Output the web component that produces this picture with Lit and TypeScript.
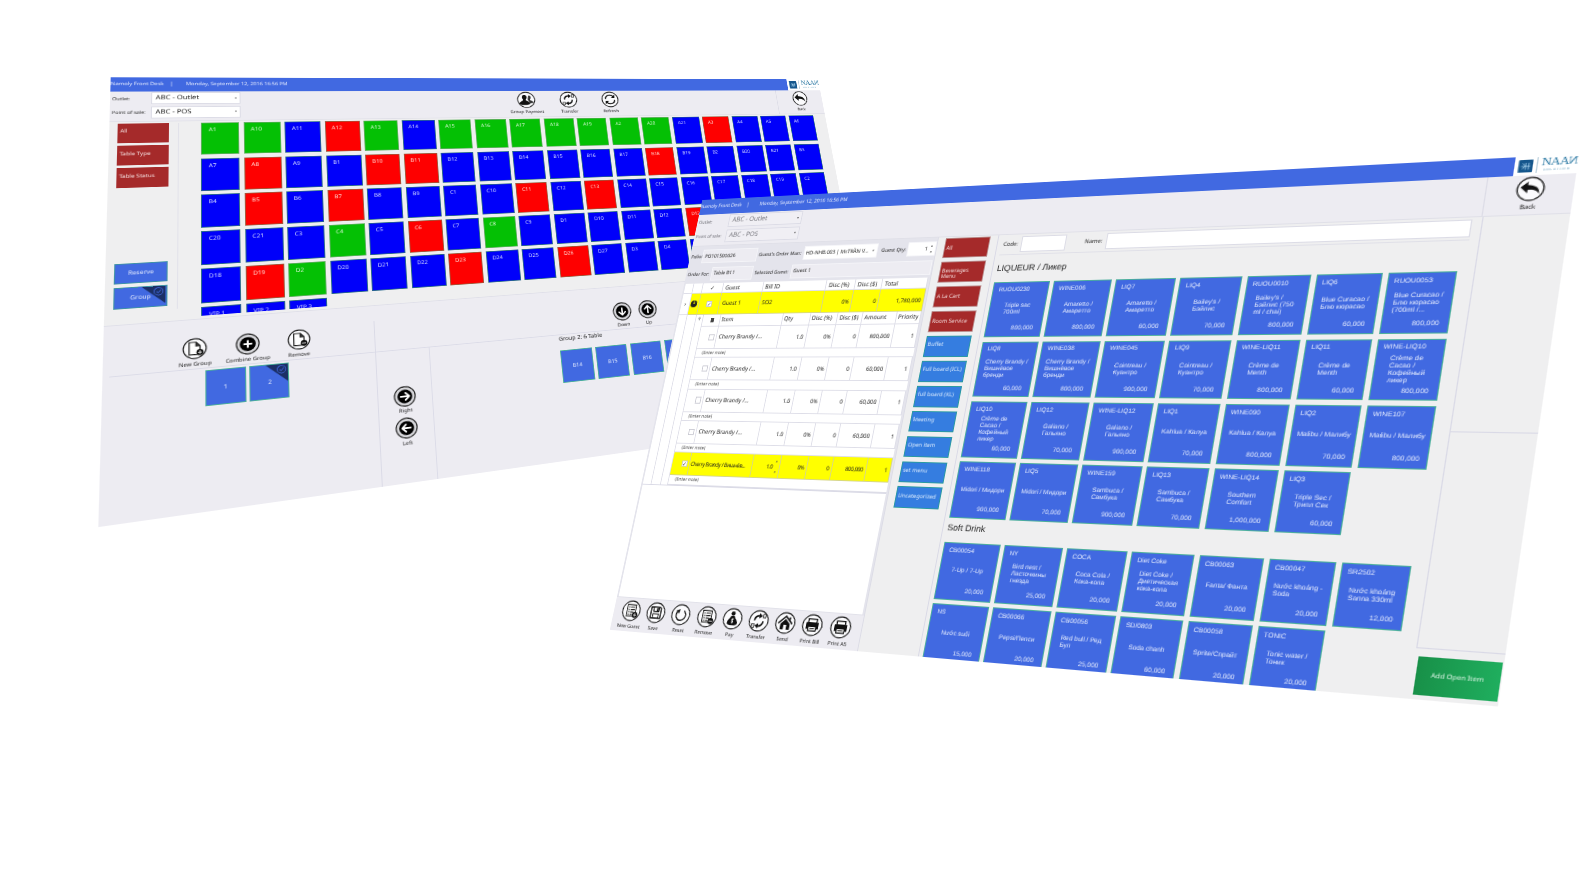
import { LitElement, html, css, svg, nothing } from "lit";
import { customElement } from "lit/decorators.js";
import { classMap } from "lit/directives/class-map.js";
import { styleMap } from "lit/directives/style-map.js";

type Pt = [number, number];

/** Windows are laid out at 1366 x 768 and drawn at this zoom before being projected. */
const ZOOM = 0.65;
const WIN_W = 1366 * ZOOM;
const WIN_H = 768 * ZOOM;

/** matrix3d that carries the window rectangle onto four screen corners (tl, tr, br, bl). */
function project(q: Pt[]): string {
  const [[x0, y0], [x1, y1], [x2, y2], [x3, y3]] = q;
  const dx1 = x1 - x2, dx2 = x3 - x2, sx = x0 - x1 + x2 - x3;
  const dy1 = y1 - y2, dy2 = y3 - y2, sy = y0 - y1 + y2 - y3;
  const den = dx1 * dy2 - dx2 * dy1;
  const g = (sx * dy2 - dx2 * sy) / den;
  const h = (dx1 * sy - sx * dy1) / den;
  const a = (x1 - x0 + g * x1) / WIN_W, b = (x3 - x0 + h * x3) / WIN_H;
  const d = (y1 - y0 + g * y1) / WIN_W, e = (y3 - y0 + h * y3) / WIN_H;
  return `matrix3d(${[a, d, 0, g / WIN_W, b, e, 0, h / WIN_H, 0, 0, 1, 0, x0, y0, 0, 1].map((n) => n.toFixed(9)).join(",")}) translate(-3px, -3px)`;
}

/* ---------- icons (36 x 36) ---------- */
const ring = svg`<circle cx="18" cy="18" r="16.3" fill="#fbfbfd" stroke="#222" stroke-width="1.7"/>`;
const disc = svg`<circle cx="18" cy="18" r="16.6" fill="#d6d6da" stroke="#222" stroke-width="1.7"/><circle cx="18" cy="18" r="11.8" fill="#000"/>`;
const arrow = (deg: number) => svg`${disc}<g transform="rotate(${deg} 18 18)" stroke="#fff" stroke-width="2.8" fill="none" stroke-linecap="round" stroke-linejoin="round"><path d="M11.5 18h13M19 12l6 6-6 6"/></g>`;
const page = svg`<path d="M10 7.5h10l5.5 6V28H10z" fill="#fff" stroke="#222" stroke-width="1.8"/><path d="M19.5 7.5v6.500h6" fill="#333" stroke="#222" stroke-width="1.200"/>`;
const list = svg`<path d="M10 8h16v19H10z" fill="#fff" stroke="#222" stroke-width="1.700"/><path d="M12.500 12h2M16 12h8M12.500 16h2M16 16h8M12.500 20h2M16 20h6M12.500 24h2M16 24h4" stroke="#222" stroke-width="1.800"/>`;
const swap = svg`<path d="M10.500 17.500c0-5 3.500-8 8.500-7.800" fill="none" stroke="#111" stroke-width="2.800"/><path d="M18 5.500l6 4.500-6 4.300z" fill="#111"/><path d="M25.500 18.500c0 5-3.500 8-8.500 7.800" fill="none" stroke="#111" stroke-width="2.800"/><path d="M18 30.500L12 26l6-4.300z" fill="#111"/><path d="M25 7h4v6h-4zM7 23h4v6H7z" fill="#ddd" stroke="#222" stroke-width="1.200"/>`;
const printer = svg`<path d="M11 8.500h14v6H11z" fill="#fff" stroke="#111" stroke-width="2"/><path d="M7.500 14h21v10.500h-4V20h-13v4.500h-4z" fill="#111"/><path d="M11.500 20h13v7h-13z" fill="#fff" stroke="#111" stroke-width="1.800"/><path d="M14 23.500h8" stroke="#111" stroke-width="1.500"/>`;
const badge = (minus: boolean) => svg`<circle cx="25.500" cy="24.500" r="5" fill="#111"/><path d="${minus ? "M22.500 24.500h6" : "M22.500 24.500h6M25.500 21.500v6"}" stroke="#fff" stroke-width="1.300"/>`;

const ICONS: Record<string, unknown> = {
  back: svg`${ring}<path d="M5.500 15.500L14.500 7.500v5c9 0 15 4.500 14.500 13-3-5.500-7.500-6.800-14.500-6.500v5z" fill="#111"/>`,
  people: svg`${ring}<path d="M23 8.500c3.200 0 4.300 2.400 3.800 5.200-.4 2-1.300 2.800-1.300 4.300 0 2 6 2 6.300 6.500l-7 1.500-4-9z" fill="#333"/><path d="M14.500 7.500c3.800 0 5 2.800 4.500 6-.4 2.200-1.600 3.200-1.600 4.700 0 2.300 7.600 2.800 7.600 8.800-5 2.300-15.500 2.300-20.500 0 0-6 7.500-6.500 7.500-8.800 0-1.500-1.200-2.500-1.600-4.700-.5-3.200.6-6 4.100-6z" fill="#111"/>`,
  swap: svg`${ring}${swap}`,
  refresh: svg`${ring}<path d="M9 17c0-5.500 4-8.500 9-8.500 3 0 5.500 1.300 7 3.500M27 19c0 5.500-4 8.500-9 8.500-3 0-5.500-1.300-7-3.500" fill="none" stroke="#111" stroke-width="2.700"/><path d="M27.500 7.500v7.500H20zM8.500 28.500V21H16z" fill="#111"/>`,
  newGroup: svg`${ring}${page}${badge(false)}`,
  removeGroup: svg`${ring}${page}${badge(true)}`,
  plus: svg`${disc}<path d="M18 11.500v13M11.500 18h13" stroke="#fff" stroke-width="3"/>`,
  right: arrow(0),
  left: arrow(180),
  down: arrow(90),
  up: arrow(-90),
  newGuest: svg`${ring}${list}${badge(false)}`,
  remove: svg`${ring}${list}${badge(true)}`,
  save: svg`${ring}<path d="M9 9h16l2 2v16H9z" fill="#fff" stroke="#111" stroke-width="2.200"/><path d="M13.500 9h9.500v7h-9.500z" fill="#fff" stroke="#111" stroke-width="1.800"/><path d="M19 10h3v5h-3z" fill="#111"/><path d="M13 27v-7h10v7" fill="none" stroke="#111" stroke-width="1.500"/>`,
  reset: svg`${ring}<path d="M12 12.500A8.700 8.700 0 1 0 23 11.300" fill="none" stroke="#222" stroke-width="2.300"/><path d="M8.500 11.500l7.500-2.500-1.500 7.500z" fill="#222"/>`,
  pay: svg`${ring}<circle cx="18" cy="9.500" r="3.600" fill="#111"/><path d="M15 13.500h6c1 3 6 7 6 11 0 3-4 4-9 4s-9-1-9-4c0-4 5-8 6-11z" fill="#111"/><path d="M20 18.500c-2.500-1.500-4.500.8-2.300 2.200 2.300 1.300 2 3.800-1.700 2.800M18 17v9" fill="none" stroke="#fff" stroke-width="1.200"/>`,
  home: svg`${ring}<path d="M6 19L18 7.500 30 19" fill="none" stroke="#111" stroke-width="2.500"/><path d="M10 19.500l8-7.800 8 7.800v9h-5.500V21h-5v7.500H10z" fill="#111"/><path d="M23.500 8.500h3v5l-3-2.500z" fill="#111"/>`,
  print: svg`${ring}${printer}`,
};

const icon = (name: string, label: string) => html`<div class="tool"><svg viewBox="0 0 36 36">${ICONS[name]}</svg><span>${label}</span></div>`;

const titlebar = html`
  <div class="titlebar">
    <div class="title"><span class="app">Namoly Front Desk</span><span class="bar">|</span><span>Monday, September 12, 2016 16:56 PM</span></div>
    <div class="logo">
      <svg viewBox="0 0 16 17"><rect width="16" height="17" rx="1" fill="#14568c"/><path d="M4.500 4.500l3 3.500-3 4M8 4v9M11.500 4v9M3 8.500h10" stroke="#a9d4ee" stroke-width="1" fill="none"/></svg>
      <div class="brand"><b>NAA<i>N</i></b><small>SOLUTION</small></div>
    </div>
  </div>`;

const header = (tools: unknown) => html`
  <div class="header">
    <div class="outlets">
      <label>Outlet:</label><div class="select">ABC - Outlet</div>
      <label>Point of sale:</label><div class="select">ABC - POS</div>
    </div>
    <div class="headtools">${tools}</div>
    <div class="backbox">${icon("back", "Back")}</div>
  </div>`;

const shared = css`
  :host { display: block; width: 1366px; height: 768px; overflow: hidden; font: 9px/1.2 "Noto Sans", sans-serif; color: #1c1c1c; background: #efeff0; text-rendering: geometricPrecision; }
  * { box-sizing: border-box; }
  .titlebar { display: flex; height: 27px; background: #fff; }
  .title { flex: 1; display: flex; align-items: center; background: #4169e1; color: #e4eafd; font-size: 9px; white-space: nowrap; }
  .app { width: 90px; }
  .bar { width: 25px; }
  .logo { width: 78px; display: flex; align-items: center; padding-left: 5px; gap: 4px; }
  .logo svg { width: 19px; height: 19px; flex: none; }
  .brand { border-left: 1px solid #b9cfdc; padding-left: 4px; color: #3c83ab; display: flex; flex-direction: column; line-height: 1; white-space: nowrap; height: 23px; }
  .brand b { font: 16.500px/16px "Liberation Serif", serif; letter-spacing: -0.8px; color: #2f7ba5; }
  .brand i { display: inline-block; transform: scaleX(-1); font-style: normal; }
  .brand small { font-size: 4px; letter-spacing: 1.7px; padding-left: 3px; }
  .header { display: flex; height: 59px; background: #edecf2; border-bottom: 2px solid #e0e0e8; }
  .outlets { display: grid; grid-template-columns: 58px 141px; grid-auto-rows: 23px; row-gap: 4px; align-items: center; padding: 3px 0 0 3px; width: 500px; font-size: 8.400px; color: #333; white-space: nowrap; }
  .select { display: flex; justify-content: space-between; align-items: center; height: 23px; padding: 0 5px 0 6px; background: #fff; border: 1px solid #dcdce6; font-size: 11.800px; color: #222; white-space: nowrap; }
  .select::after { content: ""; border: 3px solid transparent; border-top: 4px solid #555; border-bottom: 0; }
  .headtools { flex: 1; display: flex; gap: 49px; padding: 3px 0 0 193px; }
  .headtools .tool { width: 36px; }
  .backbox { width: 110px; border-left: 2px solid #dcdce6; padding-top: 3px; display: flex; justify-content: center; }
  .tool { display: flex; flex-direction: column; align-items: center; white-space: nowrap; font-size: 9px; line-height: 12px; }
  .tool svg { width: 37px; height: 37px; flex: none; }
  .tool span { margin-top: 2px; }
`;

const ROWS = [
  "A1 A10 A11 A12 A13 A14 A15 A16 A17 A18 A19 A2 A20 A21 A3 A4 A5 A6",
  "A7 A8 A9 B1 B10 B11 B12 B13 B14 B15 B16 B17 B18 B19 B2 B20 B21 B3",
  "B4 B5 B6 B7 B8 B9 C1 C10 C11 C12 C13 C14 C15 C16 C17 C18 C19 C2",
  "C20 C21 C3 C4 C5 C6 C7 C8 C9 D1 D10 D11 D12 D13 D14 D15 D16 D17",
  "D18 D19 D2 D20 D21 D22 D23 D24 D25 D26 D27 D3 D4 D5 D6 D7 D8 D9",
];
const TABLES = [...ROWS.flatMap((r) => r.split(" ")), "VIP 1", "VIP 2", "VIP 3"];
const FREE = new Set("A1 A10 A13 A15 A16 A17 A18 A19 A2 A20 C4 C8 D2".split(" "));
const BUSY = new Set("A12 A3 A8 B10 B11 B18 B5 B7 C11 C13 C6 D13 D19 D23 D26".split(" "));

const corner = html`<svg class="corner" viewBox="0 0 34 30"><path d="M0 0h34v30z" fill="#1b2f66"/><circle cx="24" cy="9" r="6.500" fill="none" stroke="#4169e1" stroke-width="1.200"/><path d="M21 9l2.500 2.500 4-5" fill="none" stroke="#4169e1" stroke-width="1.200"/></svg>`;

@customElement("floor-window")
class FloorWindow extends LitElement {
  static styles = [shared, css`
    .floor { display: flex; height: 365px; border-bottom: 2px solid #e0e0e9; }
    .side { width: 104px; height: 340px; margin-top: 3px; padding: 0 14px 0 13px; display: flex; flex-direction: column; border-right: 2px solid #e2e2ea; font-size: 9.300px; }
    .red { height: 36.500px; margin-bottom: 5.500px; background: #a52a2a; color: #f3dede; padding: 10px 0 0 3px; }
    .act { height: 36.500px; display: grid; place-items: center; background: #4169e1; color: #dfe7fd; border: 1px solid #3f93a5; position: relative; font-size: 10px; }
    .act.first { margin-top: 129px; margin-bottom: 5.500px; }
    .act, .red { flex: none; }
    .tables { height: 355px; margin: 4px 0 0 35px; overflow: hidden; display: grid; grid-template-columns: repeat(18, 60px); grid-auto-rows: 61.500px; gap: 6.400px 6.900px; align-content: start; }
    .t { background: #0000fa; border: 1px solid #2c6a8c; color: #d6dcff; font-size: 10px; padding: 6px 0 0 10px; white-space: nowrap; }
    .t.free { background: #04c004; color: #d3f5d0; border-color: #5cb05c; }
    .t.busy { background: #fe0000; color: #ffd8d2; border-color: #a05a3c; }
    .lower { display: flex; height: 317px; background: #edecf2; }
    .groups { width: 407px; background: linear-gradient(#dadae6, #dadae6) right bottom / 1.500px 290px no-repeat; }
    .strip { display: flex; height: 85px; padding-top: 31px; border-bottom: 1.500px solid #dcdce8; }
    .groups .strip { gap: 42px; padding-left: 103px; margin-left: 9px; }
    .groups .strip .tool { width: 36px; }
    .cards { display: flex; gap: 6px; padding: 3px 0 0 144px; }
    .card { position: relative; width: 60px; height: 60px; display: grid; place-items: center; background: #4169e1; border: 1px solid #4bb09b; color: #dfe7fd; font-size: 10px; }
    .corner { position: absolute; right: 0; top: 0; width: 34px; height: 30px; }
    .mover { width: 90px; }
    .mover .body { height: 232px; border-right: 1.500px solid #dcdce8; padding-top: 64px; display: flex; flex-direction: column; align-items: center; gap: 5px; }
    .rest { flex: 1; }
    .rest .strip { padding-left: 337px; gap: 13px; }
    .rest .strip .tool { width: 37px; }
    .caption { padding: 2px 0 0 229px; font-size: 10.800px; line-height: 12px; }
    .members { display: flex; gap: 7px; padding: 14px 0 0 229px; }
    .members .card { height: 62px; }
  `];
  render() {
    return html`
      ${titlebar}
      ${header(html`${icon("people", "Group Payment")}${icon("swap", "Transfer")}${icon("refresh", "Refresh")}`)}
      <div class="floor">
        <div class="side">
          <div class="red">All</div><div class="red">Table Type</div><div class="red">Table Status</div>
          <div class="act first">Reserve</div><div class="act">Group${corner}</div>
        </div>
        <div class="tables">${TABLES.map((t) => html`<div class=${classMap({ t: true, free: FREE.has(t), busy: BUSY.has(t) })}>${t}</div>`)}</div>
      </div>
      <div class="lower">
        <div class="groups">
          <div class="strip">${icon("newGroup", "New Group")}${icon("plus", "Combine Group")}${icon("removeGroup", "Remove")}</div>
          <div class="cards"><div class="card">1</div><div class="card">2${corner}</div></div>
        </div>
        <div class="mover"><div class="strip"></div><div class="body">${icon("right", "Right")}${icon("left", "Left")}</div></div>
        <div class="rest">
          <div class="strip">${icon("down", "Down")}${icon("up", "Up")}</div>
          <div class="caption">Group 2: 6 Table</div>
          <div class="members">${["B14", "B15", "B16", "B17", "B18", "B19"].map((b) => html`<div class="card">${b}</div>`)}</div>
        </div>
      </div>`;
  }
}

type Item = [string, string, string];
const LIQUEUR: Item[] = [
  ["RUOU0230", "Triple sac\n700ml", "800,000"], ["WINE006", "Amaretto /\nАмаретто", "800,000"], ["LIQ7", "Amaretto /\nАмаретто", "60,000"], ["LIQ4", "Bailey's /\nБэйлис", "70,000"], ["RUOU0010", "Bailey's /\nБэйлис (750\nml / chai)", "800,000"], ["LIQ6", "Blue Curacao /\nБлю кюрасао", "60,000"], ["RUOU0053", "Blue Curacao /\nБлю кюрасао\n(700ml /...", "800,000"],
  ["LIQ8", "Cherry Brandy /\nВишнёвое\nбренди", "60,000"], ["WINE038", "Cherry Brandy /\nВишнёвое\nбренди", "800,000"], ["WINE045", "Cointreau /\nКуантро", "900,000"], ["LIQ9", "Cointreau /\nКуантро", "70,000"], ["WINE-LIQ11", "Crème de\nMenth", "800,000"], ["LIQ11", "Crème de\nMenth", "60,000"], ["WINE-LIQ10", "Crème de\nCacao /\nКофейный\nликер", "800,000"],
  ["LIQ10", "Crème de\nCacao /\nКофейный\nликер", "60,000"], ["LIQ12", "Galiano /\nГальяно", "70,000"], ["WINE-LIQ12", "Galiano /\nГальяно", "900,000"], ["LIQ1", "Kahlua / Калуа", "70,000"], ["WINE090", "Kahlua / Калуа", "800,000"], ["LIQ2", "Malibu / Малибу", "70,000"], ["WINE107", "Malibu / Малибу", "800,000"],
  ["WINE118", "Midori / Мидори", "900,000"], ["LIQ5", "Midori / Мидори", "70,000"], ["WINE159", "Sambuca /\nСамбука", "900,000"], ["LIQ13", "Sambuca /\nСамбука", "70,000"], ["WINE-LIQ14", "Southern\nComfort", "1,000,000"], ["LIQ3", "Triple Sec /\nТрипл Сек", "60,000"],
];
const SOFT: Item[] = [
  ["CB00054", "7-Up / 7-Up", "20,000"], ["NY", "Bird nest /\nЛасточкины\nгнезда", "25,000"], ["COCA", "Coca Cola /\nКока-кола", "20,000"], ["Diet Coke", "Diet Coke /\nДиетическая\nкока-кола", "20,000"], ["CB00063", "Fanta/ Фанта", "20,000"], ["CB00047", "Nước khoáng -\nSoda", "20,000"], ["SR2502", "Nước khoáng\nSanna 330ml", "12,000"],
  ["NS", "Nước suối", "15,000"], ["CB00066", "Pepsi/Пепси", "20,000"], ["CB00056", "Red bull / Ред\nБул", "25,000"], ["SD/0803", "Soda chanh", "60,000"], ["CB00058", "Sprite/Спрайт", "20,000"], ["TONIC", "Tonic water /\nТоник", "20,000"],
];
const CATS = ["All", "Beverages\nMenu", "A La Cart", "Room Service", "Buffet", "Full board (ICL)", "full board (KL)", "Meeting", "Open item", "set menu", "Uncategorized"];
const ACTIONS: [string, string][] = [["newGuest", "New Guest"], ["save", "Save"], ["reset", "Reset"], ["remove", "Remove"], ["pay", "Pay"], ["swap", "Transfer"], ["home", "Send"], ["print", "Print Bill"], ["print", "Print A5"]];
const LINES = ["800,000", "60,000", "60,000", "60,000"];

@customElement("order-window")
class OrderWindow extends LitElement {
  static styles = [shared, css`
    .select { background: #f0eff4; color: #77777e; }
    .outlets { color: #77777e; }
    .main { display: flex; height: 682px; }
    .order { width: 456px; display: flex; flex-direction: column; background: #e4e4ec; border-right: 1px solid #dcdce6; padding-left: 3px; }
    .fields { height: 68px; display: flex; flex-direction: column; gap: 8px; padding-top: 7px; }
    .f { display: flex; align-items: center; height: 24px; font-size: 8.800px; white-space: nowrap; }
    .in { height: 24px; background: #edecf2; border: 1px solid #f4f4f8; display: flex; align-items: center; padding-left: 3px; font-size: 9.100px; }
    .in.white { background: #fff; justify-content: space-between; padding-right: 4px; }
    .folio { width: 22px; } .folioin { width: 106px; margin-right: 3px; }
    .gom { width: 84px; } .gomin { width: 134px; margin-right: 7px; }
    .qty { width: 46px; } .in.qtyin { width: 49px; padding-left: 28px; }
    .for { width: 46px; } .forin { width: 80px; margin-right: 4px; }
    .sg { width: 68px; } .sgin { width: 252px; }
    .caret { border: 3px solid transparent; border-top: 4px solid #555; border-bottom: 0; }
    .spin { display: flex; flex-direction: column; gap: 8px; }
    .spin i { border: 3px solid transparent; border-top: 3.500px solid #555; border-bottom: 0; }
    .spin i:first-child { transform: rotate(180deg); }
    .panel { height: 555px; background: #fff; margin-right: 3px; }
    .grid { display: grid; align-items: stretch; white-space: nowrap; }
    .grid > div { border-right: 1px solid #dedee8; border-bottom: 1px solid #dedee8; display: flex; align-items: center; padding: 0 4px; overflow: hidden; }
    .grid > .n { justify-content: flex-end; font-size: 9.500px; }
    .grid > .c { justify-content: center; padding: 0; }
    .g1 { grid-template-columns: 17px 18px 41px 76px 118px 52px 48px 78px; grid-template-rows: 19px 38px; font-size: 10.200px; }
    .g1 .hi { background: #ff0; border-color: #d6d68a; }
    .nest { display: flex; border-bottom: 2px solid #dadae6; }
    .gut { width: 17px; border-right: 1px solid #dedee8; }
    .gut + .gut { width: 18px; }
    .gut + .gut + .gut { width: 15px; text-align: center; font-size: 7px; padding-top: 5px; }
    .lines { flex: 1; }
    .g2 { grid-template-columns: 33px 118px 51px 50px 45px 59px 42px; height: 40px; font-size: 10.200px; }
    .g2.head { height: 21px; }
    .g2.head > div { padding: 0 3px; }
    .g2.hi { background: #ff0; }
    .g2.hi > div { border-color: #d6d68a; padding-left: 2px; }
    .g2 > .c { justify-content: flex-end; padding-right: 3px; }
    .g2.head > .c { padding-right: 10px; }
    .g2.hi .spin { gap: 16px; margin-left: 4px; }
    .note { height: 16px; padding-left: 11px; font-size: 8.300px; line-height: 15px; border-bottom: 1px solid #dedee8; color: #444; }
    .tight { letter-spacing: -.55px; }
    .grid > .name-tight { letter-spacing: -.7px; font-size: 9.800px; }
    .box { width: 11px; height: 11px; border: 1px solid #c9c9d2; background: #fff; display: grid; place-items: center; font: 10px/10px "DejaVu Sans", sans-serif; color: #333; flex: none; }
    .dot { width: 12px; height: 12px; border-radius: 50%; background: #222; color: #dd0; font: bold 9px/12px "DejaVu Sans", sans-serif; display: grid; place-items: center; }
    .sq { width: 7px; height: 7px; background: #444; }
    .toolbar { height: 59px; background: #edecf2; border-top: 2px solid #e2e2ea; display: flex; gap: 12px; padding: 4px 0 0 16px; margin-left: -3px; }
    .toolbar .tool { width: 36px; font-size: 8.700px; }
    .cats { width: 101px; padding: 1px 12px 0 12px; display: flex; flex-direction: column; gap: 6.500px; border-right: 1.500px solid #d9d9e6; font-size: 9.300px; line-height: 10.500px; }
    .cat { height: 34.900px; flex: none; background: #357de0; border: 1px solid #2a9aa0; color: #d6e8fc; padding: 8px 0 0 2px; white-space: pre; }
    .cat.red { background: #a52a2a; border-color: #b98a8a; color: #f0d5d5; padding-top: 11px; }
    .cat.red.two { padding-top: 8px; }
    .menu { width: 700px; padding-left: 6.500px; overflow: hidden; font-family: "Liberation Sans", sans-serif; }
    .search { height: 34px; margin-right: 12px; display: flex; align-items: center; font: 9px "Noto Sans", sans-serif; border-bottom: 2px solid #e0e0e8; }
    .search label:first-child { width: 32px; padding-left: 3px; }
    .code { width: 73px; height: 25px; background: #fff; border: 1px solid #dcdce6; margin-right: 29px; }
    .search label:nth-of-type(2) { width: 33px; }
    .name { flex: 1; height: 25px; background: #fff; border: 1px solid #dcdce6; }
    h2 { margin: 0; font-size: 14px; font-weight: 400; line-height: 46px; height: 45px; color: #1c1c1c; }
    h2.second { height: 38px; line-height: 32px; }
    .items { display: grid; grid-template-columns: repeat(7, 90.200px); grid-auto-rows: 90.700px; gap: 6.700px 6.850px; }
    .item { background: #4169e1; border: 1.300px solid #4bae9d; color: #e3eafd; display: grid; grid-template-rows: 21px 1fr 20px; padding: 0 9px 2px 8px; font-size: 9.800px; line-height: 10.800px; }
    .item span { padding-top: 6px; }
    .item p { margin: 0; place-self: center; white-space: pre; }
    .item em { font-style: normal; text-align: right; padding: 4px 3px 0 0; }
    .aside { flex: 1; display: flex; flex-direction: column; }
    .blank { height: 311px; border-left: 1.500px solid #d9d9e6; border-bottom: 1.500px solid #d9d9e6; }
    .blank + .blank { height: 302px; }
    .add { height: 52px; margin: 10px 2px 0 4.500px; display: grid; place-items: center; background: linear-gradient(90deg, #189048, #1fae5e); color: #d8f3e2; font-size: 9px; }
  `];
  private line(amount: string) {
    return html`
      <div class="grid g2"><div class="c"><div class="box"></div></div><div>Cherry Brandy /...</div><div class="n">1.0</div><div class="n">0%</div><div class="n">0</div><div class="n">${amount}</div><div class="n">1</div></div>
      <div class="note">(Enter note)</div>`;
  }
  private items(list: Item[]) {
    return html`<div class="items">${list.map(([c, n, p]) => html`<div class="item"><span>${c}</span><p>${n}</p><em>${p}</em></div>`)}</div>`;
  }
  render() {
    return html`
      ${titlebar}
      ${header(nothing)}
      <div class="main">
        <div class="order">
          <div class="fields">
            <div class="f"><span class="folio">Folio:</span><div class="in folioin">PO101500026</div><span class="gom">Guest's Order Man:</span><div class="in white gomin">HD-NHB.003 | Mr.TRẦN V...<i class="caret"></i></div><span class="qty">Guest Qty:</span><div class="in white qtyin">1<div class="spin"><i></i><i></i></div></div></div>
            <div class="f"><span class="for">Order For:</span><div class="in forin">Table B11</div><span class="sg">Selected Guest:</span><div class="in sgin">Guest 1</div></div>
          </div>
          <div class="panel">
            <div class="grid g1">
              <div></div><div></div><div class="c">✓</div><div>Guest</div><div>Bill ID</div><div>Disc (%)</div><div>Disc ($)</div><div>Total</div>
              <div class="c">›</div><div class="c hi"><div class="dot">↓</div></div><div class="c hi"><div class="box">✓</div></div><div class="hi">Guest 1</div><div class="hi">SO2</div><div class="n hi">0%</div><div class="n hi">0</div><div class="n hi">1,780,000</div>
            </div>
            <div class="nest">
              <div class="gut"></div><div class="gut"></div><div class="gut">⚲</div>
              <div class="lines">
                <div class="grid g2 head"><div class="c"><div class="sq"></div></div><div>Item</div><div>Qty</div><div>Disc (%)</div><div>Disc ($)</div><div>Amount</div><div>Priority</div></div>
                ${LINES.map((a) => this.line(a))}
                <div class="grid g2 hi"><div class="c"><div class="box">✓</div></div><div class="name-tight">Cherry Brandy / Вишнёв...</div><div class="n tight">1.0 <div class="spin"><i></i><i></i></div></div><div class="n tight">0%</div><div class="n">0</div><div class="n tight">800,000</div><div class="n">1</div></div>
                <div class="note">(Enter note)</div>
              </div>
            </div>
          </div>
          <div class="toolbar">${ACTIONS.map(([i, l]) => icon(i, l))}</div>
        </div>
        <div class="cats">${CATS.map((c, i) => html`<div class=${classMap({ cat: true, red: i < 4, two: i === 1 })}>${c}</div>`)}</div>
        <div class="menu">
          <div class="search"><label>Code:</label><div class="code"></div><label>Name:</label><div class="name"></div></div>
          <h2>LIQUEUR / Ликер</h2>
          ${this.items(LIQUEUR)}
          <h2 class="second">Soft Drink</h2>
          ${this.items(SOFT)}
        </div>
        <div class="aside"><div class="blank"></div><div class="blank"></div><div class="add">Add Open Item</div></div>
      </div>`;
  }
}

const BACK: Pt[] = [[110.700, 77.300], [818, 79.300], [883, 416], [98.300, 527.300]];
const FRONT: Pt[] = [[702.300, 200], [1579, 154], [1497.700, 706.700], [609.800, 630]];

@customElement("app-root")
class AppRoot extends LitElement {
  static styles = css`
    :host { display: block; position: relative; width: 1596px; height: 883px; overflow: hidden; background: #fff; }
    .win { position: absolute; left: 0; top: 0; padding: 3px; transform-origin: 0 0; }
    .zoomed { zoom: 0.65; }
  `;
  render() {
    return html`
      <div class="win" style=${styleMap({ transform: project(BACK) })}><floor-window class="zoomed"></floor-window></div>
      <div class="win" style=${styleMap({ transform: project(FRONT) })}><order-window class="zoomed"></order-window></div>`;
  }
}
